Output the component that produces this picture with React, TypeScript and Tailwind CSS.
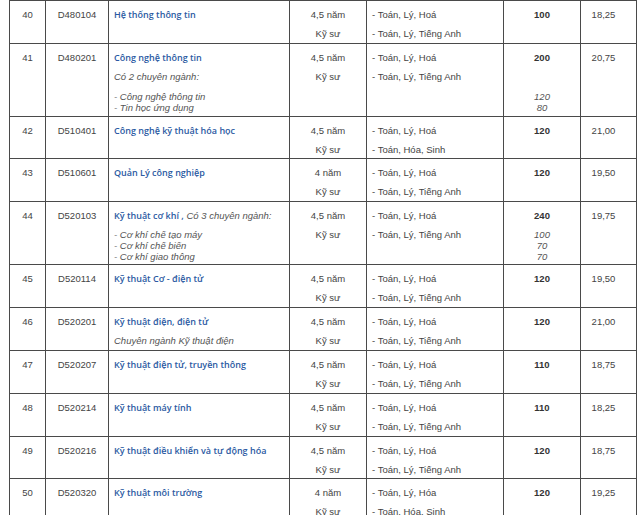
import React from "react";

type RowProps = {
  h: string;
  no: string;
  code: string;
  name: React.ReactNode;
  dur?: string;
  s1?: string;
  s2?: string;
  quota: string;
  quotaSub?: React.ReactNode;
  score: string;
};

const cell = "border-r border-[#4a4a4a] pt-[4px] leading-[19px] shrink-0";

function Blue({ children }: { children: React.ReactNode }) {
  return (
    <span className="font-['Open_Sans',sans-serif] font-semibold text-[#2b5aa2] text-[9px]">
      {children}
    </span>
  );
}

function Row({
  h,
  no,
  code,
  name,
  dur = "4,5 năm",
  s1 = "- Toán, Lý, Hoá",
  s2 = "- Toán, Lý, Tiếng Anh",
  quota,
  quotaSub,
  score,
}: RowProps) {
  return (
    <div className={`flex border-b border-[#4a4a4a] ${h}`}>
      <div className={`${cell} w-[36px] text-center`}>{no}</div>
      <div className={`${cell} w-[63px] text-center`}>{code}</div>
      <div className={`${cell} w-[181px] pl-[5px]`}>{name}</div>
      <div className={`${cell} w-[77px] text-center`}>
        <div>{dur}</div>
        <div>Kỹ sư</div>
      </div>
      <div className={`${cell} w-[137px] pl-[5px]`}>
        <div>{s1}</div>
        <div>{s2}</div>
      </div>
      <div className={`${cell} w-[77px] text-center`}>
        <div className="font-bold text-[#333]">{quota}</div>
        {quotaSub}
      </div>
      <div className={`${cell} w-[56px] text-center pr-[10px]`}>{score}</div>
    </div>
  );
}

export default function App() {
  return (
    <div className="w-[640px] h-[515px] overflow-hidden bg-white">
      <div className="ml-[9px] w-[628px] border-l border-t border-[#4a4a4a] font-['Liberation_Sans',Arial,sans-serif] text-[9.5px] text-[#444]">
        <Row h="h-[43px]" no="40" code="D480104" name={<Blue>Hệ thống thông tin</Blue>} quota="100" score="18,25" />
        <Row
          h="h-[73px]"
          no="41"
          code="D480201"
          name={
            <>
              <div>
                <Blue>Công nghệ thông tin</Blue>
              </div>
              <div className="italic text-[#555]">Có 2 chuyên ngành:</div>
              <div className="italic text-[#555] leading-[11px] mt-[5px]">
                <div>- Công nghệ thông tin</div>
                <div>- Tin học ứng dụng</div>
              </div>
            </>
          }
          quota="200"
          quotaSub={
            <div className="italic text-[#555] leading-[11px] mt-[24px]">
              <div>120</div>
              <div>80</div>
            </div>
          }
          score="20,75"
        />
        <Row
          h="h-[42px]"
          no="42"
          code="D510401"
          name={<Blue>Công nghệ kỹ thuật hóa học</Blue>}
          s2="- Toán, Hóa, Sinh"
          quota="120"
          score="21,00"
        />
        <Row h="h-[43px]" no="43" code="D510601" name={<Blue>Quản Lý công nghiệp</Blue>} dur="4 năm" quota="120" score="19,50" />
        <Row
          h="h-[63px]"
          no="44"
          code="D520103"
          name={
            <>
              <div>
                <Blue>Kỹ thuật cơ khí ,</Blue>
                <span className="italic text-[#555]"> Có 3 chuyên ngành:</span>
              </div>
              <div className="italic text-[#555] leading-[11px] mt-[4px]">
                <div>- Cơ khí chế tạo máy</div>
                <div>- Cơ khí chế biến</div>
                <div>- Cơ khí giao thông</div>
              </div>
            </>
          }
          quota="240"
          quotaSub={
            <div className="italic text-[#555] leading-[11px] mt-[4px]">
              <div>100</div>
              <div>70</div>
              <div>70</div>
            </div>
          }
          score="19,75"
        />
        <Row h="h-[43px]" no="45" code="D520114" name={<Blue>Kỹ thuật Cơ - điện tử</Blue>} quota="120" score="19,50" />
        <Row
          h="h-[43px]"
          no="46"
          code="D520201"
          name={
            <>
              <div>
                <Blue>Kỹ thuật điện, điện tử</Blue>
              </div>
              <div className="italic text-[#555]">Chuyên ngành Kỹ thuật điện</div>
            </>
          }
          quota="120"
          score="21,00"
        />
        <Row h="h-[43px]" no="47" code="D520207" name={<Blue>Kỹ thuật điện tử, truyền thông</Blue>} quota="110" score="18,75" />
        <Row h="h-[43px]" no="48" code="D520214" name={<Blue>Kỹ thuật máy tính</Blue>} quota="110" score="18,25" />
        <Row h="h-[42px]" no="49" code="D520216" name={<Blue>Kỹ thuật điều khiển và tự động hóa</Blue>} quota="120" score="18,75" />
        <Row
          h="h-[43px]"
          no="50"
          code="D520320"
          name={<Blue>Kỹ thuật môi trường</Blue>}
          dur="4 năm"
          s1="- Toán, Lý, Hóa"
          s2="- Toán, Hóa, Sinh"
          quota="120"
          score="19,25"
        />
      </div>
    </div>
  );
}
